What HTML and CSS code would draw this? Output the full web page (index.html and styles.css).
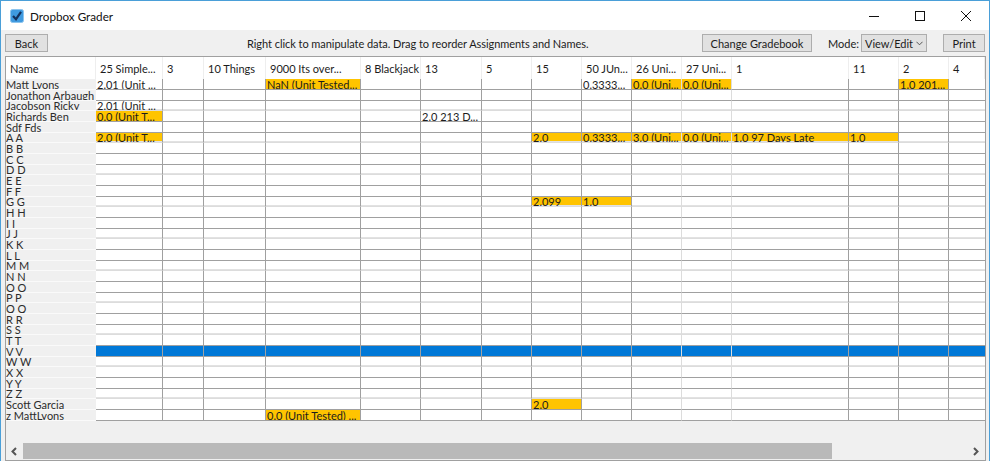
FILE: index.html
```html
<!DOCTYPE html>
<html lang="en">
<head>
  <meta charset="UTF-8">
  <title>Dropbox Grader</title>
  <link rel="stylesheet" href="styles.css">
</head>
<body>
  <div class="window">
    <header class="titlebar">
      <svg class="app-icon" width="14" height="14" viewBox="0 0 14 14"><rect x="0.5" y="0.5" width="13" height="13" rx="2" fill="#3f9ae0" stroke="#8cc4ee"/><path d="M3 7l3 3.2L11 2.8" fill="none" stroke="#14305c" stroke-width="2.2"/></svg>
      <span class="title">Dropbox Grader</span>
      <div class="win-buttons">
        <svg width="10" height="10" viewBox="0 0 10 10"><path d="M0 5.5h10" stroke="#111"/></svg>
        <svg width="10" height="10" viewBox="0 0 10 10"><rect x="0.5" y="0.5" width="9" height="9" fill="none" stroke="#111"/></svg>
        <svg width="10" height="10" viewBox="0 0 10 10"><path d="M0 0l10 10M10 0L0 10" stroke="#111"/></svg>
      </div>
    </header>
    <div class="toolbar">
      <button class="btn back">Back</button>
      <span class="hint">Right click to manipulate data. Drag to reorder Assignments and Names.</span>
      <button class="btn gradebook">Change Gradebook</button>
      <span class="mode-label">Mode:</span>
      <span class="mode-select">View/Edit
        <svg width="7" height="5" viewBox="0 0 8 5"><path d="M0.5 0.5L4 4l3.5-3.5" fill="none" stroke="#444"/></svg>
      </span>
      <button class="btn print">Print</button>
    </div>
    <div class="table-pane">
      <table class="grades">
        <colgroup>
          <col class="c-name"><col class="c1"><col class="c2"><col class="c3"><col class="c4"><col class="c5"><col class="c6"><col class="c7"><col class="c7"><col class="c7"><col class="c7"><col class="c7"><col class="c8"><col class="c7"><col class="c7"><col class="c9">
        </colgroup>
        <thead>
          <tr><th>Name</th><th>25 Simple...</th><th>3</th><th>10 Things</th><th>9000 Its over...</th><th>8 Blackjack</th><th>13</th><th>5</th><th>15</th><th>50 JUn...</th><th>26 Uni...</th><th>27 Uni...</th><th>1</th><th>11</th><th>2</th><th>4</th></tr>
        </thead>
        <tbody>
          <tr><th>Matt Lyons</th><td>2.01 (Unit ...</td><td></td><td></td><td class="late">NaN (Unit Tested...</td><td></td><td></td><td></td><td></td><td>0.3333...</td><td class="late">0.0 (Uni...</td><td class="late">0.0 (Uni...</td><td></td><td></td><td class="late">1.0 201...</td><td></td></tr>
          <tr><th>Jonathon Arbaugh</th><td></td><td></td><td></td><td></td><td></td><td></td><td></td><td></td><td></td><td></td><td></td><td></td><td></td><td></td><td></td></tr>
          <tr><th>Jacobson Ricky</th><td>2.01 (Unit ...</td><td></td><td></td><td></td><td></td><td></td><td></td><td></td><td></td><td></td><td></td><td></td><td></td><td></td><td></td></tr>
          <tr><th>Richards Ben</th><td class="late">0.0 (Unit T...</td><td></td><td></td><td></td><td></td><td>2.0 213 D...</td><td></td><td></td><td></td><td></td><td></td><td></td><td></td><td></td><td></td></tr>
          <tr><th>Sdf Fds</th><td></td><td></td><td></td><td></td><td></td><td></td><td></td><td></td><td></td><td></td><td></td><td></td><td></td><td></td><td></td></tr>
          <tr><th>A A</th><td class="late">2.0 (Unit T...</td><td></td><td></td><td></td><td></td><td></td><td></td><td class="late">2.0</td><td class="late">0.3333...</td><td class="late">3.0 (Uni...</td><td class="late">0.0 (Uni...</td><td class="late">1.0 97 Days Late</td><td class="late">1.0</td><td></td><td></td></tr>
          <tr><th>B B</th><td></td><td></td><td></td><td></td><td></td><td></td><td></td><td></td><td></td><td></td><td></td><td></td><td></td><td></td><td></td></tr>
          <tr><th>C C</th><td></td><td></td><td></td><td></td><td></td><td></td><td></td><td></td><td></td><td></td><td></td><td></td><td></td><td></td><td></td></tr>
          <tr><th>D D</th><td></td><td></td><td></td><td></td><td></td><td></td><td></td><td></td><td></td><td></td><td></td><td></td><td></td><td></td><td></td></tr>
          <tr><th>E E</th><td></td><td></td><td></td><td></td><td></td><td></td><td></td><td></td><td></td><td></td><td></td><td></td><td></td><td></td><td></td></tr>
          <tr><th>F F</th><td></td><td></td><td></td><td></td><td></td><td></td><td></td><td></td><td></td><td></td><td></td><td></td><td></td><td></td><td></td></tr>
          <tr><th>G G</th><td></td><td></td><td></td><td></td><td></td><td></td><td></td><td class="late">2.099</td><td class="late">1.0</td><td></td><td></td><td></td><td></td><td></td><td></td></tr>
          <tr><th>H H</th><td></td><td></td><td></td><td></td><td></td><td></td><td></td><td></td><td></td><td></td><td></td><td></td><td></td><td></td><td></td></tr>
          <tr><th>I I</th><td></td><td></td><td></td><td></td><td></td><td></td><td></td><td></td><td></td><td></td><td></td><td></td><td></td><td></td><td></td></tr>
          <tr><th>J J</th><td></td><td></td><td></td><td></td><td></td><td></td><td></td><td></td><td></td><td></td><td></td><td></td><td></td><td></td><td></td></tr>
          <tr><th>K K</th><td></td><td></td><td></td><td></td><td></td><td></td><td></td><td></td><td></td><td></td><td></td><td></td><td></td><td></td><td></td></tr>
          <tr><th>L L</th><td></td><td></td><td></td><td></td><td></td><td></td><td></td><td></td><td></td><td></td><td></td><td></td><td></td><td></td><td></td></tr>
          <tr><th>M M</th><td></td><td></td><td></td><td></td><td></td><td></td><td></td><td></td><td></td><td></td><td></td><td></td><td></td><td></td><td></td></tr>
          <tr><th>N N</th><td></td><td></td><td></td><td></td><td></td><td></td><td></td><td></td><td></td><td></td><td></td><td></td><td></td><td></td><td></td></tr>
          <tr><th>O O</th><td></td><td></td><td></td><td></td><td></td><td></td><td></td><td></td><td></td><td></td><td></td><td></td><td></td><td></td><td></td></tr>
          <tr><th>P P</th><td></td><td></td><td></td><td></td><td></td><td></td><td></td><td></td><td></td><td></td><td></td><td></td><td></td><td></td><td></td></tr>
          <tr><th>Q Q</th><td></td><td></td><td></td><td></td><td></td><td></td><td></td><td></td><td></td><td></td><td></td><td></td><td></td><td></td><td></td></tr>
          <tr><th>R R</th><td></td><td></td><td></td><td></td><td></td><td></td><td></td><td></td><td></td><td></td><td></td><td></td><td></td><td></td><td></td></tr>
          <tr><th>S S</th><td></td><td></td><td></td><td></td><td></td><td></td><td></td><td></td><td></td><td></td><td></td><td></td><td></td><td></td><td></td></tr>
          <tr><th>T T</th><td></td><td></td><td></td><td></td><td></td><td></td><td></td><td></td><td></td><td></td><td></td><td></td><td></td><td></td><td></td></tr>
          <tr class="selected"><th>V V</th><td></td><td></td><td></td><td></td><td></td><td></td><td></td><td></td><td></td><td></td><td></td><td></td><td></td><td></td><td></td></tr>
          <tr><th>W W</th><td></td><td></td><td></td><td></td><td></td><td></td><td></td><td></td><td></td><td></td><td></td><td></td><td></td><td></td><td></td></tr>
          <tr><th>X X</th><td></td><td></td><td></td><td></td><td></td><td></td><td></td><td></td><td></td><td></td><td></td><td></td><td></td><td></td><td></td></tr>
          <tr><th>Y Y</th><td></td><td></td><td></td><td></td><td></td><td></td><td></td><td></td><td></td><td></td><td></td><td></td><td></td><td></td><td></td></tr>
          <tr><th>Z Z</th><td></td><td></td><td></td><td></td><td></td><td></td><td></td><td></td><td></td><td></td><td></td><td></td><td></td><td></td><td></td></tr>
          <tr><th>Scott Garcia</th><td></td><td></td><td></td><td></td><td></td><td></td><td></td><td class="late">2.0</td><td></td><td></td><td></td><td></td><td></td><td></td><td></td></tr>
          <tr><th>z MattLyons</th><td></td><td></td><td></td><td class="late">0.0 (Unit Tested) ...</td><td></td><td></td><td></td><td></td><td></td><td></td><td></td><td></td><td></td><td></td><td></td></tr>
        </tbody>
      </table>
      <div class="scrollbar">
        <svg class="arrow" width="6" height="9" viewBox="0 0 6 9"><path d="M5 1L1.5 4.5 5 8" fill="none" stroke="#555" stroke-width="2"/></svg>
        <div class="thumb"></div>
        <svg class="arrow" width="6" height="9" viewBox="0 0 6 9"><path d="M1 1l3.5 3.5L1 8" fill="none" stroke="#555" stroke-width="2"/></svg>
      </div>
    </div>
  </div>
</body>
</html>
```

FILE: styles.css
```css
/* Window frame */
html, body {
  margin: 0;
  height: 100%;
}
body {
  font-family: 'Lato', sans-serif;
  font-size: 11px;
  color: #1c1c1c;
}
.window {
  box-sizing: border-box;
  height: 461px;
  background: #f0f0f0;
  border: 1px solid #4a9fd8;
  border-bottom: none;
  display: flex;
  flex-direction: column;
}

/* Title bar */
.titlebar {
  height: 29px;
  background: #fff;
  display: flex;
  align-items: center;
  padding-left: 9px;
  flex: none;
}
.title {
  margin-left: 6px;
  font-size: 11.7px;
  color: #111;
}
.win-buttons {
  margin-left: auto;
  display: flex;
  gap: 36px;
  padding-right: 18px;
}

/* Toolbar */
.toolbar {
  height: 26px;
  display: flex;
  align-items: center;
  padding: 0 4px;
  flex: none;
}
.toolbar > * { flex: none; }
.btn {
  font: inherit;
  color: #1c1c1c;
  height: 18px;
  padding: 0;
  background: #e1e1e1;
  border: 1px solid #adadad;
}
.back { width: 43px; }
.gradebook { width: 110px; margin-left: 113px; }
.print { width: 42px; margin-left: 16px; }
.hint { margin-left: 199px; width: 342px; white-space: nowrap; letter-spacing: -0.05px; }
.mode-label { margin-left: 16px; width: 29px; }
.mode-select {
  box-sizing: border-box;
  width: 66px;
  height: 18px;
  margin-left: 4px;
  padding: 0 3px 0 3px;
  background: #e1e1e1;
  border: 1px solid #adadad;
  display: flex;
  align-items: center;
  justify-content: space-between;
}

/* Table */
.table-pane {
  flex: 1;
  margin: 0 3px 0 4px;
  border: 1px solid #a0a0a0;
  display: flex;
  flex-direction: column;
  justify-content: space-between;
  overflow: hidden;
}
.grades {
  border-collapse: separate;
  border-spacing: 0;
  table-layout: fixed;
  width: 979px;
  background: #fff;
}
.c-name { width: 90px; }
.c1 { width: 67px; }
.c2 { width: 41px; }
.c3 { width: 62px; }
.c4 { width: 95px; }
.c5 { width: 60px; }
.c6 { width: 61px; }
.c7 { width: 50px; }
.c8 { width: 117px; }
.c9 { width: 36px; }

.grades th, .grades td {
  padding: 0 1px;
  font-weight: normal;
  text-align: left;
  white-space: nowrap;
  overflow: hidden;
}
.grades thead th {
  height: 22px;
  padding: 0 4px;
  border-right: 1px solid #eee;
}

/* rows repeat 11, 11, 10 px high */
.grades tbody th, .grades tbody td {
  line-height: 9px;
  height: 10px;
}
.grades tbody tr:nth-child(3n) th, .grades tbody tr:nth-child(3n) td {
  height: 9px;
}
.grades tbody th {
  background: #f0f0f0;
  border-bottom: 1px solid #fafafa;
  color: #2c2c2c;
  padding: 0;
}
.grades tbody td {
  border-right: 1px solid #a0a0a0;
  border-bottom: 1px solid #a0a0a0;
}
.grades tbody tr:nth-child(3n) td {
  border-bottom-color: #dcdcdc;
  box-shadow: inset 0 -1px #e2e2e2;
}
.grades td:nth-child(11), .grades td:nth-child(12) {
  border-right-color: #dcdcdc;
}
.grades td:last-child {
  border-right: none;
}
.grades td.late {
  background: #ffc400;
}
.grades .selected td {
  background: #0078d7;
}

/* Horizontal scrollbar */
.scrollbar {
  height: 17px;
  display: flex;
  align-items: center;
  flex: none;
  background: #f0f0f0;
}
.arrow {
  flex: none;
  margin: 0 6px 0 5px;
}
.thumb {
  align-self: flex-start;
  height: 16px;
  width: 809px;
  background: #b9b9b9;
  margin-right: auto;
}
```
